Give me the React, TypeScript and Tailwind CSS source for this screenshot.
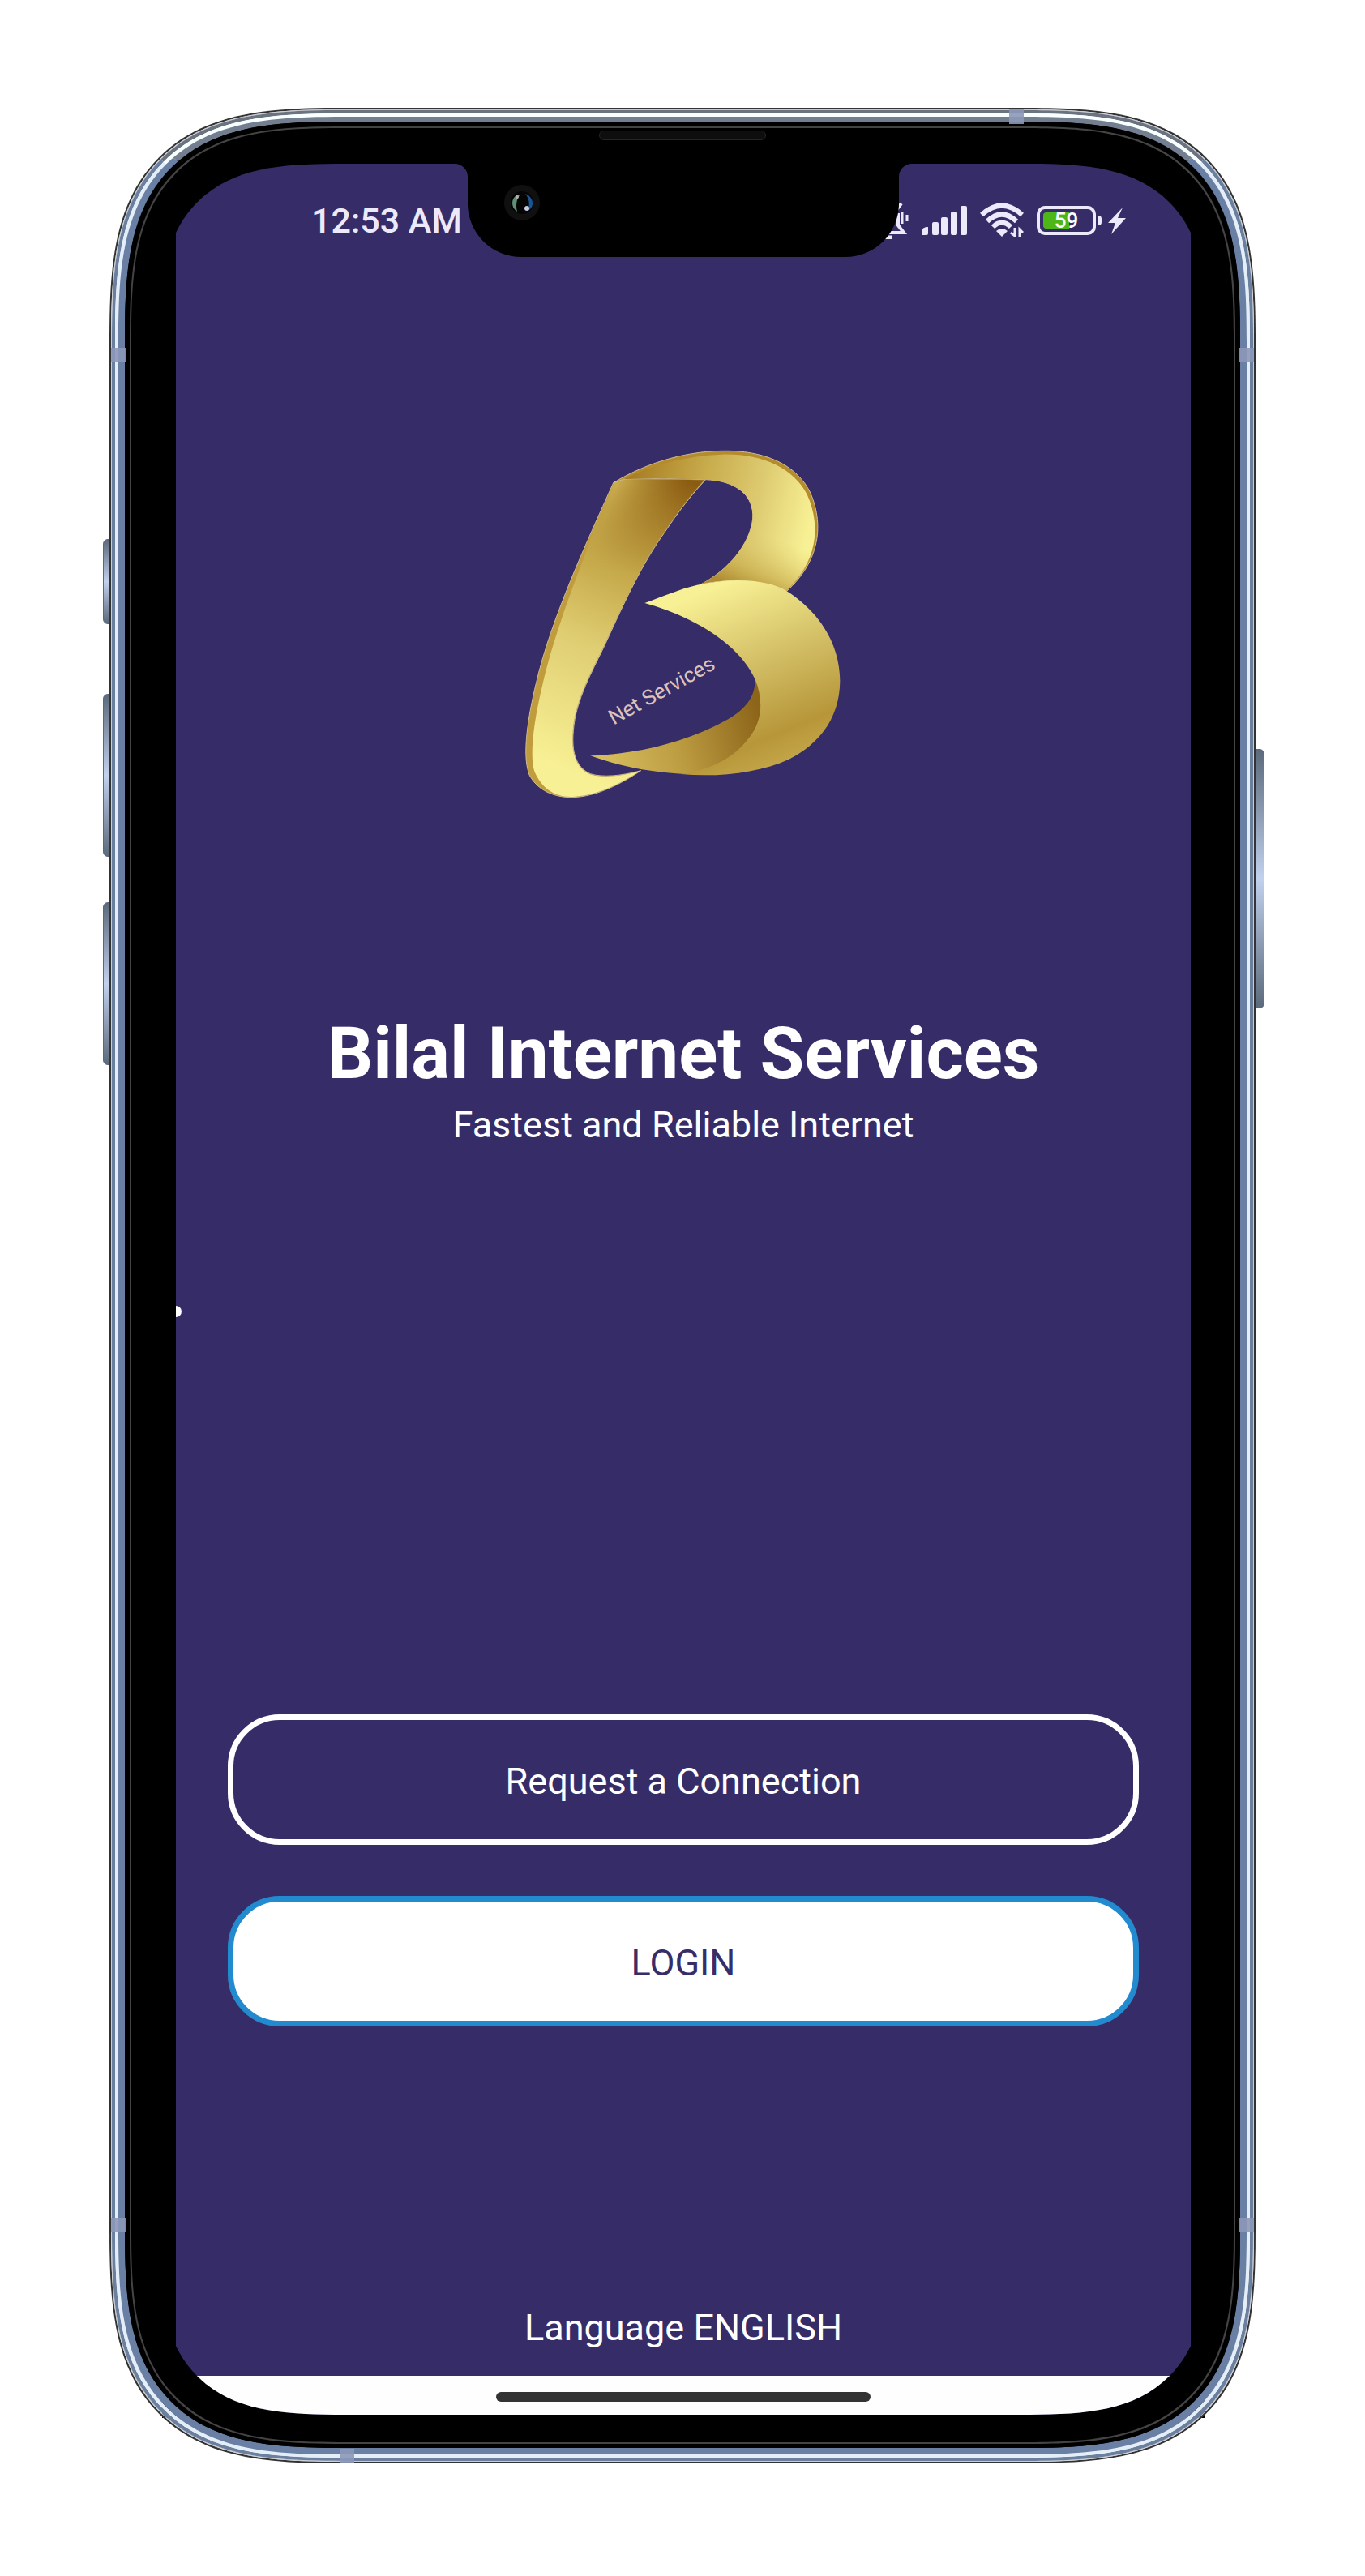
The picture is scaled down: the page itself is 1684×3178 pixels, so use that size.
import type { ReactNode } from "react";

const SQUIRCLE = "[corner-shape:superellipse(1.55)]";

function Logo() {
  return (
    <svg viewBox="9 0 1320 1440" className="w-[440px] max-w-full" role="img" aria-label="Bilal Net Services logo">
      <defs>
        <linearGradient id="stem" gradientUnits="userSpaceOnUse" x1="690" y1="190" x2="230" y2="1260">
          <stop offset="0" stopColor="#8a5c12" />
          <stop offset="0.14" stopColor="#a47c28" />
          <stop offset="0.34" stopColor="#c4a748" />
          <stop offset="0.6" stopColor="#dfcd72" />
          <stop offset="1" stopColor="#f8f094" />
        </linearGradient>
        <linearGradient id="stemLight" gradientUnits="userSpaceOnUse" x1="380" y1="320" x2="620" y2="400">
          <stop offset="0" stopColor="#cfb455" stopOpacity="0.9" />
          <stop offset="1" stopColor="#a87d28" stopOpacity="0" />
        </linearGradient>
        <linearGradient id="fadeDown" gradientUnits="userSpaceOnUse" x1="450" y1="200" x2="400" y2="520">
          <stop offset="0" stopColor="#fff" />
          <stop offset="1" stopColor="#000" />
        </linearGradient>
        <mask id="stemFade" maskUnits="userSpaceOnUse" x="0" y="0" width="1320" height="1440">
          <rect width="1320" height="1440" fill="url(#fadeDown)" />
        </mask>
        <linearGradient id="top" gradientUnits="userSpaceOnUse" x1="460" y1="180" x2="1140" y2="340">
          <stop offset="0" stopColor="#a67a20" />
          <stop offset="0.4" stopColor="#c8ac4c" />
          <stop offset="0.7" stopColor="#ddca70" />
          <stop offset="1" stopColor="#f8f094" />
        </linearGradient>
        <linearGradient id="topShade" gradientUnits="userSpaceOnUse" x1="880" y1="585" x2="960" y2="380">
          <stop offset="0" stopColor="#b08c34" />
          <stop offset="0.35" stopColor="#c8ad4e" stopOpacity="0.7" />
          <stop offset="1" stopColor="#dfca70" stopOpacity="0" />
        </linearGradient>
        <linearGradient id="bowl" gradientUnits="userSpaceOnUse" x1="800" y1="580" x2="1060" y2="1220">
          <stop offset="0" stopColor="#f8f094" />
          <stop offset="0.45" stopColor="#d3bf66" />
          <stop offset="0.85" stopColor="#b79639" />
          <stop offset="1" stopColor="#c2a547" />
        </linearGradient>
        <linearGradient id="tail" gradientUnits="userSpaceOnUse" x1="380" y1="1220" x2="950" y2="1060">
          <stop offset="0" stopColor="#d5bc5c" />
          <stop offset="0.45" stopColor="#bd9d42" />
          <stop offset="1" stopColor="#8d651a" />
        </linearGradient>
      </defs>
      <g stroke="#cdbb94" strokeWidth="3" strokeLinejoin="round">
        <path
          fill="#c09c3c"
          d="M410 197C310 420 180 700 125 935C85 1100 75 1220 100 1280C130 1335 190 1362 260 1361C350 1358 440 1310 512 1262C440 1282 370 1288 325 1274C270 1250 255 1190 262 1115C270 1000 335 890 382 790C450 640 520 490 600 380C650 305 700 240 750 187L450 183Z"
        />
        <path
          fill="url(#stem)"
          stroke="none"
          d="M412 197C330 400 205 700 150 935C110 1100 100 1220 120 1270C145 1325 190 1362 260 1359C350 1356 440 1308 508 1264C440 1284 370 1290 323 1276C268 1250 253 1190 260 1115C268 1000 333 890 380 790C448 640 518 490 598 380C648 305 698 240 746 187L450 183Z"
        />
        <path
          fill="url(#stemLight)"
          stroke="none"
          mask="url(#stemFade)"
          d="M412 197C370 300 320 410 280 520L520 520C590 390 650 300 746 187L450 183Z"
        />
        <path
          fill="#b48c2c"
          d="M410 197C520 130 660 82 810 79C970 75 1090 130 1140 235C1195 365 1165 495 1052 598C990 560 850 545 735 572C835 520 915 425 926 330C932 240 860 188 750 185Q600 178 450 183Z"
        />
        <path
          fill="url(#top)"
          stroke="none"
          d="M450 183C540 135 680 96 810 92C960 88 1075 140 1127 240C1183 365 1160 495 1050 596C990 560 850 545 735 572C835 520 915 425 926 330C932 240 860 188 750 185Q600 178 450 183Z"
        />
        <path
          fill="url(#topShade)"
          stroke="none"
          d="M1050 596C990 560 850 545 735 572C835 520 900 440 922 360L1160 360C1158 450 1130 530 1050 596Z"
        />
        <path
          fill="url(#tail)"
          stroke="none"
          d="M325 1207C490 1200 640 1165 780 1100C890 1050 935 1000 935 925L980 1000L960 1240L690 1276C540 1268 430 1245 325 1207Z"
        />
        <path
          fill="url(#bowl)"
          stroke="none"
          d="M526 642C600 615 650 592 720 575C850 545 990 555 1052 598C1180 680 1248 800 1249 930C1248 1060 1180 1160 1060 1220C950 1270 800 1288 660 1275C760 1262 850 1220 905 1150C965 1080 965 1000 935 925C875 790 700 690 526 642Z"
        />
      </g>
      <text
        x="411"
        y="1094"
        transform="rotate(-29 411 1094)"
        fontSize="78"
        fill="#dcc3bd"
        className="font-[Roboto,sans-serif]"
      >
        Net Services
      </text>
    </svg>
  );
}

function MutedBell() {
  return (
    <svg viewBox="0 0 44 46" className="h-[46px] w-[44px]" fill="none" stroke="#ece9fb" strokeWidth="4" aria-hidden="true">
      <path d="M35 2L2 46" />
      <path d="M8 38H38L31 29V14" />
      <path d="M14 44H23" strokeWidth="5" />
      <path d="M36 13V27M42 16V24" strokeWidth="3" />
    </svg>
  );
}

function Signal() {
  return (
    <svg viewBox="0 0 56 36" className="h-9 w-14" fill="#ece9fb" aria-hidden="true">
      <path d="M0 36V31Q1 26 8 26V34Q8 36 6 36Z" />
      <rect x="13" y="20" width="8" height="16" rx="2" />
      <rect x="24" y="14" width="8" height="22" rx="2" />
      <rect x="36" y="7" width="8" height="29" rx="2" />
      <rect x="48" y="0" width="8" height="36" rx="2" />
    </svg>
  );
}

function Wifi() {
  return (
    <svg viewBox="0 0 54 42" className="h-[42px] w-[54px]" fill="none" stroke="#ece9fb" strokeWidth="6" aria-hidden="true">
      <path d="M2 14Q27 -9 52 14" />
      <path d="M9 22Q27 5 45 22" />
      <path d="M16 29Q27 18 38 29" />
      <path d="M20 34Q27 28 34 34L27 41Z" fill="#ece9fb" stroke="none" />
      <path d="M43 30V40L38 36M49 42V32L53 36" strokeWidth="3" />
    </svg>
  );
}

function Battery() {
  return (
    <div className="flex items-center gap-0.5">
      <div className="relative flex h-9 w-[73px] items-center rounded-[10px] border-4 border-[#ece9fb] p-1">
        <div className="h-full w-8 rounded-l-[4px] bg-[#4cb716]" />
        <span className="absolute inset-0 flex items-center justify-center text-[26px] leading-none font-medium text-white">
          59
        </span>
      </div>
      <div className="h-3 w-[5px] rounded-r bg-[#ece9fb]" />
    </div>
  );
}

function Bolt() {
  return (
    <svg viewBox="0 0 22 33" className="h-[33px] w-[22px]" fill="#ece9fb" aria-hidden="true">
      <path d="M18 0L0 19H9L4 33L22 13H12Z" />
    </svg>
  );
}

function StatusBar() {
  return (
    <header className="flex h-[140px] items-center justify-between pr-20 pl-[167px]">
      <time className="text-[43px] leading-none font-medium text-[#ece9fb]">12:53 AM</time>
      <div className="flex items-center gap-4">
        <MutedBell />
        <Signal />
        <Wifi />
        <div className="flex items-center gap-2">
          <Battery />
          <Bolt />
        </div>
      </div>
    </header>
  );
}

function Notch() {
  return (
    <div className="absolute top-0 left-1/2 h-[115px] w-[532px] -translate-x-1/2 rounded-b-[66px] bg-black">
      <svg viewBox="0 0 16 16" className="absolute top-0 -left-4 size-4" aria-hidden="true">
        <path d="M0 0H16V16A16 16 0 0 0 0 0Z" />
      </svg>
      <svg viewBox="0 0 16 16" className="absolute top-0 -right-4 size-4" aria-hidden="true">
        <path d="M16 0H0V16A16 16 0 0 1 16 0Z" />
      </svg>
      <svg viewBox="0 0 44 44" className="absolute top-[26px] left-[45px] size-11" aria-hidden="true">
        <circle cx="22" cy="22" r="22" fill="#101010" />
        <circle cx="22" cy="22" r="14" fill="#050505" />
        <path d="M16 12C8 17 8 28 16 33C14 26 15 18 19 13Z" fill="#5f9078" />
        <path d="M26 11C37 15 38 28 29 32C32 24 31 17 26 11Z" fill="#1c5390" />
        <circle cx="16" cy="15" r="2" fill="#a9b5ae" />
        <circle cx="28" cy="29" r="3" fill="#c9cbe0" />
      </svg>
    </div>
  );
}

function Screen() {
  return (
    <div className="relative flex flex-col bg-[#362d68] text-white">
      <StatusBar />
      <main className="flex flex-col items-center px-16 pb-[31px] text-center">
        <div className="mt-[188px]">
          <Logo />
        </div>
        <h1 className="mt-[236px] text-[89px] leading-[108px] font-bold">Bilal Internet Services</h1>
        <p className="mt-1.5 text-[45px] leading-[56px]">Fastest and Reliable Internet</p>
        <div className="mt-[699px] flex w-full flex-col gap-[63px] text-[45px]">
          <button className="h-[161px] w-full rounded-[64px] border-[7px] border-white pt-1">Request a Connection</button>
          <button className="h-[161px] w-full rounded-[64px] border-[7px] border-[#228bd0] bg-white pt-1 text-[#372d69]">
            LOGIN
          </button>
        </div>
        <button className="mt-[344px] text-[45px] leading-[56px]">Language ENGLISH</button>
      </main>
      <div className="absolute top-[1409px] left-0 h-3.5 w-[7px] rounded-r-full bg-white" />
      <footer className="flex h-12 items-center justify-center bg-[#fefefe] pt-1">
        <div className="h-3 w-[462px] rounded-full bg-[#333]" />
      </footer>
    </div>
  );
}

function SideKey({ className }: { className: string }) {
  return (
    <div
      className={`absolute border border-[#5b6580] bg-linear-to-b from-[#5c6a7c] via-[#c2d2ee] to-[#5c6a7c] ${className}`}
    />
  );
}

function Band({ className }: { className: string }) {
  return <div className={`absolute bg-[#8c98b8]/90 ${className}`} />;
}

function Phone({ children }: { children: ReactNode }) {
  return (
    <div className="relative w-full max-w-[1414px]">
      <SideKey className="top-[532px] -left-2 h-[105px] w-4 rounded-l-md" />
      <SideKey className="top-[723px] -left-2 h-[201px] w-4 rounded-l-md" />
      <SideKey className="top-[980px] -left-2 h-[201px] w-4 rounded-l-md" />
      <SideKey className="top-[791px] -right-[11px] h-[320px] w-5 rounded-r-md" />
      <div className="absolute right-[63px] bottom-[58px] left-[65px] h-10 bg-black" />
      <div className={`relative rounded-[290px] border-2 border-[#333] ${SQUIRCLE}`}>
        <div className={`rounded-[288px] border border-[#c9ccd2] ${SQUIRCLE}`}>
          <div className={`rounded-[287px] border-4 border-[#6b7f9f] border-t-[#6b7280] ${SQUIRCLE}`}>
            <div className={`rounded-[283px] border-4 border-[#e3eef8] border-t-[#f8ffff] ${SQUIRCLE}`}>
              <div className={`rounded-[279px] border-8 border-t-[6px] border-[#697fa3] border-t-[#737f90] bg-black ${SQUIRCLE}`}>
                <div
                  className={`rounded-[271px] border-6 border-b-5 border-black shadow-[inset_0_0_2px_#26303f] ${SQUIRCLE}`}
                >
                  <div
                    className={`rounded-[265px] border-2 border-[#444] bg-black pt-11 pr-8 pb-[34px] pl-[34px] ${SQUIRCLE}`}
                  >
                    {children}
                  </div>
                </div>
              </div>
            </div>
          </div>
        </div>
      </div>
      <div className="absolute top-7 left-1/2 h-3 w-[206px] -translate-x-1/2 rounded-full border border-[#242424] bg-[#0e0e0e]" />
      <Band className="top-[296px] left-0.5 h-[17px] w-[18px]" />
      <Band className="top-[296px] right-0.5 h-[17px] w-[18px]" />
      <Band className="bottom-[287px] left-0.5 h-[18px] w-[18px]" />
      <Band className="right-0.5 bottom-[287px] h-[18px] w-[18px]" />
      <Band className="top-0.5 right-[286px] h-[18px] w-[18px]" />
      <Band className="bottom-0.5 left-[284px] h-[18px] w-[18px]" />
    </div>
  );
}

export default function App() {
  return (
    <div className="flex min-h-screen justify-center bg-white px-[135px] pt-[133px] pb-[137px] font-[Roboto,sans-serif]">
      <Phone>
        <div className="relative overflow-hidden rounded-[230px] bg-black px-[21px] [corner-shape:superellipse(1.585)]">
          <Screen />
          <Notch />
        </div>
      </Phone>
    </div>
  );
}
